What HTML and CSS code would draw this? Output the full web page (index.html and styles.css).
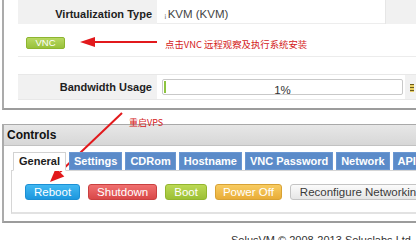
FILE: index.html
```html
<!DOCTYPE html>
<html lang="zh">
<head>
<meta charset="utf-8">
<title>Controls</title>
<link rel="stylesheet" href="styles.css">
</head>
<body>
<div class="page">
  <section class="panel info-panel">
    <div class="row type-row">
      <div class="label">Virtualization Type</div>
      <div class="value"><span class="mark">¡</span>KVM (KVM)</div>
      <div class="side"></div>
    </div>
    <div class="vnc-row">
      <button class="btn btn-vnc">VNC</button>
      <svg class="arrow-left" width="77" height="12" viewBox="0 0 77 12"><path d="M14 6 H77" stroke="#e2191c" stroke-width="2"/><path d="M0 6 L15 1 L15 11 Z" fill="#e2191c"/></svg>
      <span class="note">点击VNC 远程观察及执行系统安装</span>
    </div>
    <div class="row bw-row">
      <div class="label">Bandwidth Usage</div>
      <div class="value">
        <div class="progress"><div class="fill" style="width:2px"></div><span class="pct">1%</span></div>
      </div>
      <div class="side"><span class="tick"></span></div>
    </div>
  </section>

  <section class="panel controls">
    <header class="panel-head">Controls</header>
    <div class="tab-area">
      <nav class="tabs">
        <span class="tab active">General</span>
        <span class="tab">Settings</span>
        <span class="tab">CDRom</span>
        <span class="tab">Hostname</span>
        <span class="tab">VNC Password</span>
        <span class="tab">Network</span>
        <span class="tab">API</span>
      </nav>
      <div class="tab-body">
        <button class="btn btn-blue">Reboot</button>
        <button class="btn btn-red">Shutdown</button>
        <button class="btn btn-green">Boot</button>
        <button class="btn btn-orange">Power Off</button>
        <button class="btn btn-gray">Reconfigure Networking</button>
      </div>
    </div>
  </section>

  <footer class="footer">SolusVM © 2008-2013 Soluslabs Ltd</footer>

  <div class="annot">
    <svg class="annot-arrow" width="416" height="240" viewBox="0 0 416 240">
      <path d="M122 113 L60 172" stroke="#e2191c" stroke-width="2" fill="none"/>
      <polygon points="50,182 64.3,176.6 55.9,168" fill="#e2191c"/>
    </svg>
    <span class="annot-text">重启VPS</span>
  </div>
</div>
</body>
</html>
```

FILE: styles.css
```css
html, body {
  margin: 0;
  padding: 0;
  background: #fff;
}
body {
  font-family: "Liberation Sans", Arial, sans-serif;
  color: #222;
  overflow: hidden;
}
.page {
  position: relative;
  width: 470px;
  height: 240px;
  overflow: hidden;
}

/* panels */
.panel {
  margin-left: 2px;
  border-left: 2px solid #ababab;
  border-bottom: 2px solid #9c9c9c;
}
.info-panel {
  height: 108px;
  padding-left: 14px;
}

.row {
  display: flex;
}
.label {
  width: 139px;
  box-sizing: border-box;
  background: #f1f1f1;
  text-align: right;
  padding-right: 5px;
  font-weight: bold;
  font-size: 11px;
  color: #1e1e1e;
}
.side {
  flex: 1;
  background: #f1f1f1;
}

.type-row {
  height: 24px;
}
.type-row .label {
  line-height: 20px;
  padding-top: 4px;
}
.type-row .value {
  width: 228px;
  box-sizing: border-box;
  border-bottom: 1px solid #ededed;
  padding: 4px 0 0 7px;
  line-height: 20px;
  font-size: 11.5px;
  color: #444;
}
.type-row .side {
  border-left: 1px solid #e6e6e6;
}
.mark {
  font-size: 8px;
  color: #777;
  margin-right: 1px;
}

.vnc-row {
  display: flex;
  align-items: flex-start;
  height: 19px;
  padding: 13px 0 0 8px;
  border-bottom: 1px solid #ececec;
}
.arrow-left {
  margin: -1px 0 0 15px;
}
.note {
  margin: 1px 0 0 8px;
  font-family: "Noto Sans CJK SC", sans-serif;
  font-size: 9.4px;
  line-height: 12px;
  color: #d42121;
}

.bw-row {
  margin-top: 17px;
  height: 24px;
  border-top: 1px solid #e8e8e8;
  border-bottom: 1px solid #e8e8e8;
}
.bw-row .label {
  line-height: 24px;
}
.bw-row .value {
  width: 248px;
  padding: 4px 0 0 5px;
  box-sizing: border-box;
}
.progress {
  position: relative;
  width: 239px;
  height: 14px;
  border: 1px solid #c9c9c9;
  border-radius: 2px;
  background: #fff;
  text-align: center;
}
.fill {
  position: absolute;
  left: 1px;
  top: 1px;
  bottom: 1px;
  background: #8dc43f;
}
.pct {
  font-size: 11.5px;
  line-height: 14px;
  color: #333;
}
.bw-row .side {
  padding: 9px 0 0 5px;
}
.tick {
  display: block;
  width: 4px;
  height: 8px;
  background: repeating-linear-gradient(#6b5b1c 0 1px, #e9cf62 1px 3px);
}

/* controls */
.controls {
  margin-top: 14px;
  height: 97px;
}
.panel-head {
  height: 20px;
  line-height: 20px;
  padding-left: 3px;
  border-top: 1px solid #a9a9a9;
  border-bottom: 1px solid #c2c2c2;
  background: linear-gradient(#e7e7e7, #d7d7d7);
  font-weight: bold;
  font-size: 12px;
  color: #111;
}
.tab-area {
  padding: 6px 0 0 7px;
}
.tabs {
  display: flex;
  gap: 3px;
  padding-left: 2px;
  position: relative;
  z-index: 1;
}
.tab {
  flex: none;
  height: 16px;
  line-height: 16px;
  padding: 0 4px;
  border: 1px solid #6a97d2;
  background: #5b8bc9;
  color: #fff;
  font-weight: bold;
  font-size: 11px;
}
.tab.active {
  background: #fff;
  color: #1c1c1c;
  border-color: #d2d2d2;
  border-bottom-color: #fff;
  height: 17px;
  padding: 0 5px;
}
.tab-body {
  display: flex;
  gap: 8px;
  margin-top: -1px;
  padding: 13px 0 12px 13px;
  border: 1px solid #d6d6d6;
  border-bottom: 2px solid #e2e2e2;
}

/* buttons */
.btn {
  flex: none;
  height: 16px;
  padding: 0 8px;
  border: 1px solid;
  border-radius: 3px;
  font-family: "Liberation Sans", Arial, sans-serif;
  font-size: 11.5px;
  line-height: 14px;
  color: #fff;
  cursor: pointer;
}
.btn-vnc {
  width: 39px;
  height: 12px;
  padding: 0;
  border-radius: 2px;
  font-size: 9.5px;
  line-height: 10px;
  border-color: #8db52f;
  background: linear-gradient(#b8d862, #98c13b);
}
.btn-blue {
  border-color: #1b8fd4;
  background: linear-gradient(#41b8f2, #1d97de);
}
.btn-red {
  border-color: #c94040;
  background: linear-gradient(#f07070, #d94848);
}
.btn-green {
  border-color: #93b52e;
  background: linear-gradient(#bcd955, #9cc035);
}
.btn-orange {
  border-color: #d8a234;
  background: linear-gradient(#f8cc62, #e9ad38);
  padding: 0 7px;
}
.btn-gray {
  border-color: #c4c4c4;
  background: linear-gradient(#fbfbfb, #e6e6e6);
  color: #3a3a3a;
  padding: 0 9px;
}

/* footer */
.footer {
  margin-top: 11px;
  padding-left: 231px;
  font-size: 11px;
  line-height: 13px;
  color: #333;
  white-space: nowrap;
}

/* annotation overlay */
.annot {
  position: absolute;
  left: 0;
  top: 0;
  width: 416px;
  height: 240px;
  pointer-events: none;
}
.annot-arrow {
  position: absolute;
  left: 0;
  top: 0;
}
.annot-text {
  position: absolute;
  left: 129px;
  top: 117px;
  font-family: "Noto Sans CJK SC", sans-serif;
  font-size: 9px;
  line-height: 12px;
  color: #d42121;
}
```
